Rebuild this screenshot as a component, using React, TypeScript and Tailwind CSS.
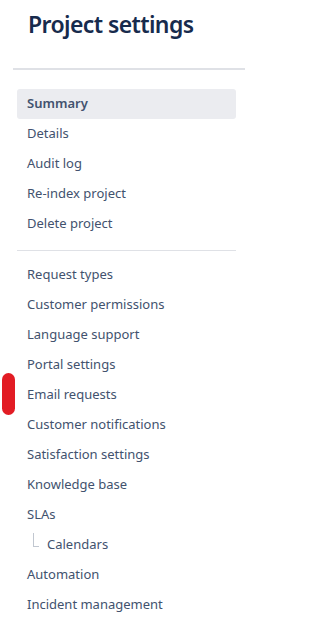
import React from "react";

const group1 = ["Summary", "Details", "Audit log", "Re-index project", "Delete project"];
const group2a = [
  "Request types",
  "Customer permissions",
  "Language support",
  "Portal settings",
  "Email requests",
  "Customer notifications",
  "Satisfaction settings",
  "Knowledge base",
  "SLAs",
];

function Item({ label, active }: { label: string; active?: boolean }) {
  return (
    <div
      className={
        "h-[30px] flex items-center px-[10px] rounded-[3px] text-[13px] " +
        (active ? "bg-[#ebecf0] text-[#42526e] font-semibold" : "text-[#42526e]")
      }
    >
      {label}
    </div>
  );
}

export default function App() {
  return (
    <div
      className="relative w-[245px] h-[630px] bg-white overflow-hidden"
      style={{ fontFamily: '"Segoe UI", "Noto Sans", "Open Sans", sans-serif' }}
    >
      <div className="pl-[28px] pt-[9px] h-[68px]">
        <h1 className="text-[23px] leading-[30px] font-semibold text-[#172b4d] tracking-[-0.6px]">
          Project settings
        </h1>
      </div>
      <div className="ml-[13px] h-[2px] bg-[#dfe1e6]" />
      <div className="pl-[17px] pr-[9px] pt-[19px]">
        {group1.map((l, i) => (
          <Item key={l} label={l} active={i === 0} />
        ))}
        <div className="h-[1px] bg-[#dfe1e6] mt-[11px] mb-[9px]" />
        {group2a.map((l) => (
          <Item key={l} label={l} />
        ))}
        <div className="h-[30px] flex items-center pl-[10px] text-[13px] text-[#42526e]">
          <div className="w-[6px] h-[14px] border-l border-b border-[#c1c7d0] mr-[8px] -mt-[10px] ml-[6px]" />
          Calendars
        </div>
        <Item label="Automation" />
        <Item label="Incident management" />
      </div>
      <div className="absolute left-[2px] top-[373px] w-[13px] h-[42px] rounded-full bg-[#e21c24]" />
    </div>
  );
}
